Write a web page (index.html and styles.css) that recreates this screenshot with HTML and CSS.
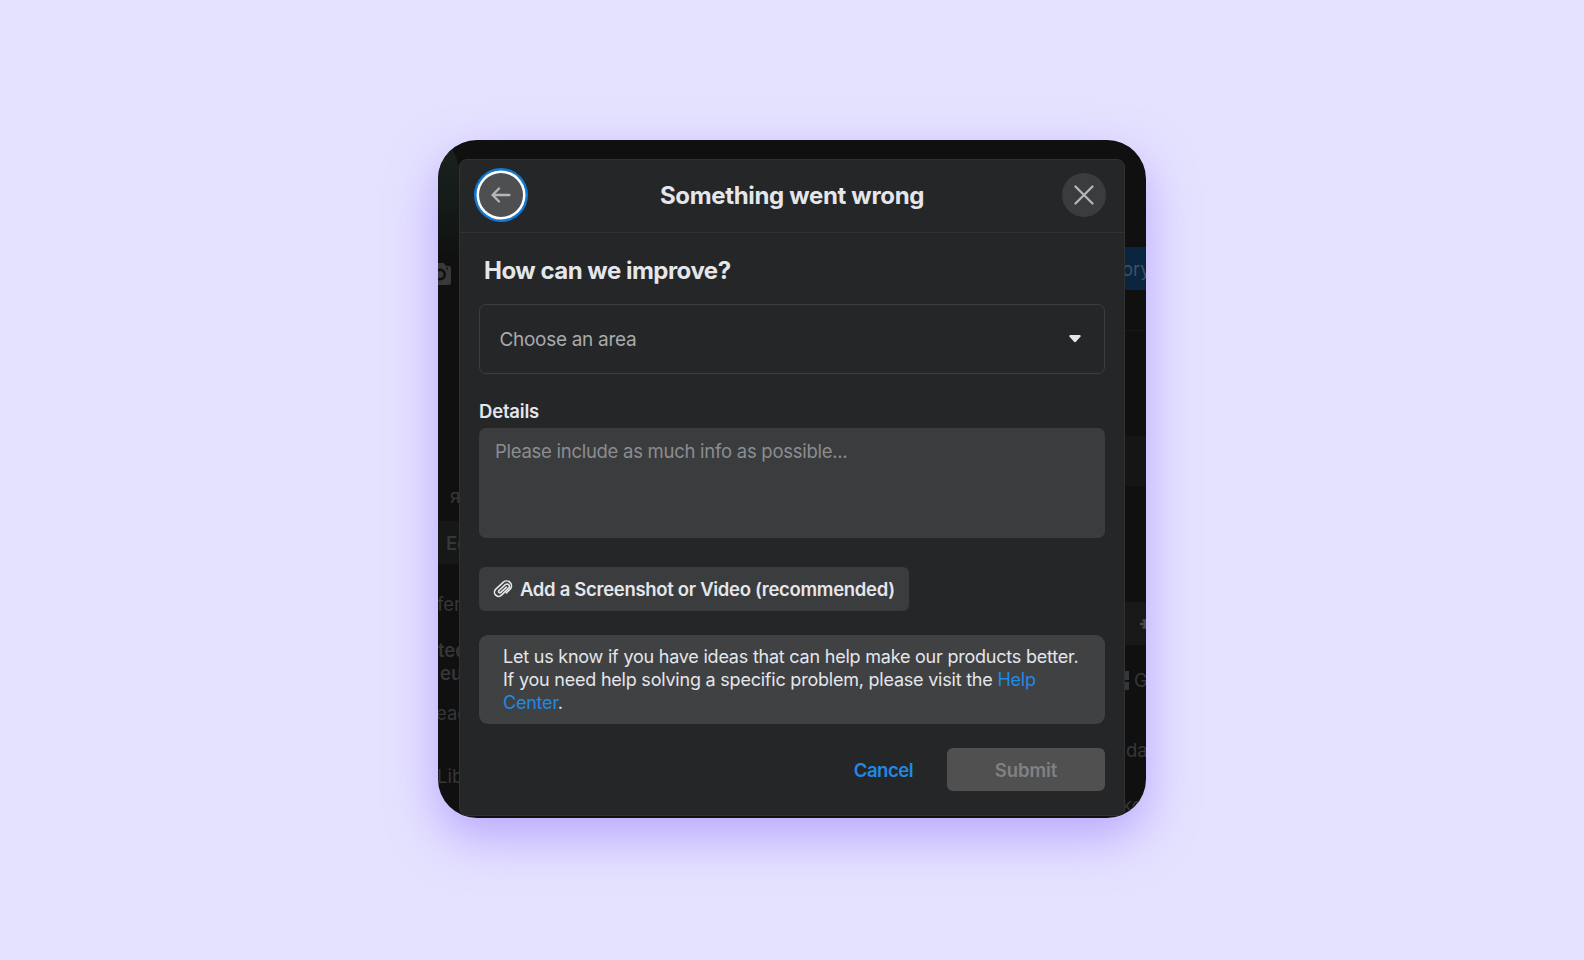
FILE: index.html
```
<!DOCTYPE html>
<html lang="en">
<head>
  <meta charset="UTF-8">
  <meta name="viewport" content="width=device-width, initial-scale=1.0">
  <title>Something went wrong</title>
  <link rel="stylesheet" href="styles.css">
</head>
<body>
  <main class="frame">
    <!-- Page behind the dialog -->
    <div class="page" aria-hidden="true">
      <div class="strip strip-left">
        <div class="cover"></div>
        <svg class="camera" width="24" height="24" viewBox="0 0 24 24"><path fill="#38393a" fill-rule="evenodd" d="M3 4h4l2-3h7l2 3h2.500a2.500 2.500 0 0 1 2.500 2.500v14a2.500 2.500 0 0 1-2.500 2.500H3zM12 6.500a6 6 0 1 0 0 12 6 6 0 0 0 0-12zm0 2.500a3.500 3.500 0 1 1 0 7 3.500 3.500 0 0 1 0-7zM19 5.500a1 1 0 1 0 0 2 1 1 0 0 0 0-2z"/></svg>
        <p class="bit name">я</p>
        <p class="bit edit">Ed</p>
        <p class="bit fer">fer</p>
        <p class="bit bold ted">ted</p>
        <p class="bit bold seu">eu</p>
        <p class="bit ead">ead</p>
        <p class="bit lib">Lib</p>
      </div>
      <div class="strip strip-right">
        <p class="bit story">ory</p>
        <div class="rule"></div>
        <div class="block"></div>
        <div class="tool"><svg width="10" height="16" viewBox="0 0 10 16"><path fill="#4a4a4a" d="M4 0h6v16H4v-4h2v-2H0V6h6V4H4z"/></svg></div>
        <p class="bit grid-view"><span class="tiles"></span>G</p>
        <p class="bit nda">da</p>
        <p class="bit ko">ko</p>
      </div>
    </div>

    <section class="dialog">
      <header>
        <button class="round back" aria-label="Back">
          <svg width="20" height="20" viewBox="0 0 20 20"><path d="M18.500 10H2M8 3.500L1.500 10l6.500 6.500"/></svg>
        </button>
        <h1>Something went wrong</h1>
        <button class="round close" aria-label="Close">
          <svg width="20" height="20" viewBox="0 0 20 20"><path d="M1.500 1.500l17 17M18.500 1.500l-17 17"/></svg>
        </button>
      </header>
      <div class="content">
        <h2>How can we improve?</h2>
        <div class="select">
          <span>Choose an area</span>
          <svg width="12" height="8" viewBox="0 0 12 8"><path fill="#e4e6eb" d="M1.200 0h9.600q1.200 .3.800 1.600L7.200 6.600q-1.200 1.100-2.400 0L.4 1.600Q0 .3 1.200 0z"/></svg>
        </div>
        <label for="details">Details</label>
        <textarea id="details" placeholder="Please include as much info as possible..."></textarea>
        <button class="attach">
          <svg width="20" height="20" viewBox="0 0 20 20"><path d="M13.500 8.200l-5.700 5.200a1.300 1.300 0 0 1-1.800-1.900l6.300-5.800a2.400 2.400 0 0 1 3.400 3.400l-7.200 7a4.100 4.100 0 0 1-5.900-5.700l7.800-7.300a4.900 4.900 0 0 1 6.900 6.900l-4 4"/></svg>
          <span>Add a Screenshot or Video (recommended)</span>
        </button>
        <p class="note">Let us know if you have ideas that can help make our products better. If you need help solving a specific problem, please visit the <a href="#">Help Center</a>.</p>
        <div class="actions">
          <button class="cancel">Cancel</button>
          <button class="submit" disabled>Submit</button>
        </div>
      </div>
    </section>
  </main>
</body>
</html>
```
FILE: styles.css
```
:root {
  --bg: #e5e2ff;
  --page: #101010;
  --dialog: #252628;
  --field: #3b3c3e;
  --border: #3c3d3f;
  --text: #e4e6eb;
  --muted: #a8aaad;
  --link: #2089e6;
}

* { box-sizing: border-box; }

body {
  margin: 0;
  height: 100vh;
  padding-top: 140px;
  background: var(--bg);
  color: var(--text);
  font-family: Inter, "Liberation Sans", sans-serif;
  font-size: 18.5px;
}

h1, h2, p { margin: 0; }

button {
  border: none;
  padding: 0;
  font: inherit;
  letter-spacing: inherit;
  cursor: pointer;
}

.frame {
  position: relative;
  width: 708px;
  height: 678px;
  margin: 0 auto;
  border-radius: 39px;
  overflow: hidden;
  background: var(--page);
  box-shadow: 0 19px 48px rgba(150, 120, 255, 0.55);
}

/* Dimmed page */
.page {
  display: flex;
  justify-content: space-between;
  height: 100%;
  color: #363738;
}

.strip {
  width: 22px;
  height: 100%;
  overflow: hidden;
}

.bit {
  height: 23px;
  line-height: 23px;
  white-space: nowrap;
}
.bold { font-weight: 600; }

.cover {
  height: 114px;
  background: linear-gradient(#1b211f, #141a18 60%, #101110);
  border-radius: 0 22px 0 0 / 0 40px 0 0;
}
.camera { display: block; margin: 8px 0 0 -10px; }
.name { margin: 199px 0 0 12px; }
.edit {
  height: 43px;
  margin-top: 13px;
  padding-left: 8px;
  line-height: 45px;
  font-weight: 600;
  background: #161717;
}
.fer { margin: 29px 0 0 -1px; }
.ted { margin-top: 23px; }
.seu { margin-left: 2px; }
.ead { margin: 17px 0 0 -2px; }
.lib { margin: 40px 0 0 -1px; }

.story {
  height: 43px;
  margin-top: 107px;
  line-height: 45px;
  text-indent: -2px;
  color: #43515f;
  background: #0a2540;
}
.rule { height: 1px; margin-top: 40px; background: #181818; }
.block { height: 50px; margin-top: 105px; background: #151515; }
.tool {
  display: flex;
  align-items: center;
  height: 43px;
  margin-top: 116px;
  padding-left: 16px;
  background: #181818;
}
.grid-view { display: flex; align-items: center; gap: 5px; margin-top: 24px; }
.tiles {
  flex-shrink: 0;
  width: 5px;
  height: 19px;
  background: linear-gradient(#363738 9px, transparent 9px 11px, #363738 11px);
}
.nda { margin: 47px 0 0 2px; }
.ko { margin: 32px 0 0 -2px; }

/* Dialog */
.dialog {
  position: absolute;
  top: 19px;
  left: 21px;
  width: 666px;
  height: 657px;
  border: 1px solid #303133;
  border-radius: 8px;
  background: var(--dialog);
}

header {
  display: flex;
  align-items: center;
  justify-content: space-between;
  height: 73px;
  padding: 0 18.5px 1.5px;
  border-bottom: 1px solid #303133;
}
h1 { font-size: 24px; font-weight: 700; letter-spacing: -0.34px; }

.round {
  display: flex;
  align-items: center;
  justify-content: center;
  width: 44px;
  height: 44px;
  border-radius: 50%;
  background: var(--field);
}
.round path {
  fill: none;
  stroke: #b4b6b9;
  stroke-width: 2.3;
  stroke-linecap: round;
  stroke-linejoin: round;
}
.back {
  background: #4e4f51;
  box-shadow: 0 0 0 2.500px #fff, 0 0 0 5px #1279d3;
}

.content { padding: 22px 19px 0; }
h2 {
  padding-left: 5px;
  line-height: 32px;
  font-size: 24px;
  font-weight: 700;
  letter-spacing: -0.5px;
}

.select {
  display: flex;
  align-items: center;
  justify-content: space-between;
  height: 70px;
  margin-top: 17px;
  padding: 0 23px 0 19.5px;
  border: 1px solid var(--border);
  border-radius: 7px;
  color: var(--muted);
  font-size: 19px;
  letter-spacing: -0.3px;
}
.select svg { margin-bottom: 1px; }

label {
  display: block;
  margin-top: 25px;
  line-height: 24px;
  font-weight: 600;
  letter-spacing: -0.2px;
}
textarea {
  display: block;
  width: 100%;
  height: 110px;
  margin-top: 5px;
  padding: 11px 16px;
  border: none;
  border-radius: 7px;
  background: var(--field);
  color: var(--text);
  font: inherit;
  line-height: 24px;
  letter-spacing: -0.27px;
  resize: none;
}
textarea::placeholder { color: #8b8d90; }

.attach {
  display: flex;
  align-items: center;
  gap: 7px;
  width: 430px;
  height: 44px;
  margin-top: 29px;
  padding-left: 14px;
  border-radius: 6px;
  background: var(--field);
  color: var(--text);
  font-weight: 600;
  letter-spacing: -0.31px;
  white-space: nowrap;
}
.attach path {
  fill: none;
  stroke: var(--text);
  stroke-width: 1.6;
  stroke-linecap: round;
}

.note {
  height: 89px;
  margin-top: 24px;
  padding: 10px 20px 0 24px;
  border-radius: 9px;
  background: #404143;
  font-size: 18px;
  line-height: 23px;
  letter-spacing: -0.22px;
}
.note a { color: var(--link); text-decoration: none; }

.actions {
  display: flex;
  justify-content: flex-end;
  gap: 34px;
  margin-top: 24px;
  font-weight: 600;
}
.cancel { background: none; color: var(--link); letter-spacing: -0.5px; }
.submit {
  width: 158px;
  height: 43px;
  border-radius: 6px;
  background: #505051;
  color: #808183;
  letter-spacing: -0.1px;
}
```
